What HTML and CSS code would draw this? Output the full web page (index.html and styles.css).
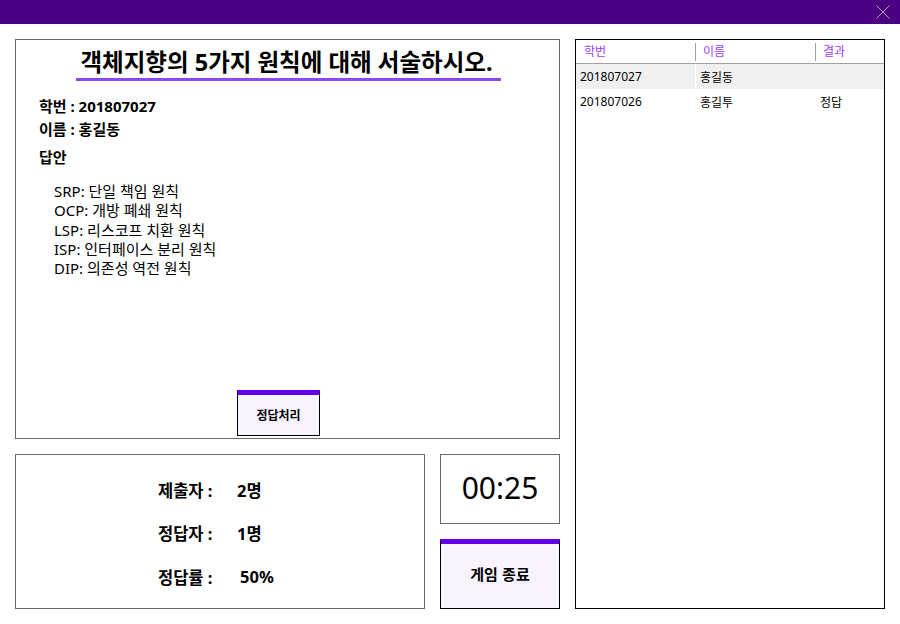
FILE: index.html
```html
<!DOCTYPE html>
<html lang="ko">
<head>
<meta charset="utf-8">
<title>채점</title>
<link rel="stylesheet" href="styles.css">
</head>
<body>
<div class="titlebar">
  <svg class="close" width="14" height="14" viewBox="0 0 14 14"><path d="M0.5 0.5 L13.5 13.5 M13.5 0.5 L0.5 13.5" stroke="#a8a8a8" stroke-width="1" fill="none"/></svg>
</div>
<div class="main">
  <div class="left">
    <section class="question">
      <h1 class="q-title"><span>객체지향의 5가지 원칙에 대해 서술하시오.</span></h1>
      <div class="info">학번 : 201807027</div>
      <div class="info">이름 : 홍길동</div>
      <div class="info answer-label">답안</div>
      <div class="answer">
        <div>SRP: 단일 책임 원칙</div>
        <div>OCP: 개방 폐쇄 원칙</div>
        <div>LSP: 리스코프 치환 원칙</div>
        <div>ISP: 인터페이스 분리 원칙</div>
        <div>DIP: 의존성 역전 원칙</div>
      </div>
      <button class="btn btn-mark">정답처리</button>
    </section>
    <div class="bottom">
      <section class="stats">
        <div class="stat"><span class="label">제출자 :</span><span class="val">2명</span></div>
        <div class="stat"><span class="label">정답자 :</span><span class="val">1명</span></div>
        <div class="stat"><span class="label">정답률 :</span><span class="val val-wide">50%</span></div>
      </section>
      <div class="side">
        <div class="timer">00:25</div>
        <button class="btn btn-end">게임 종료</button>
      </div>
    </div>
  </div>
  <section class="list">
    <div class="row head">
      <div class="cell">학번</div>
      <div class="cell sep">이름</div>
      <div class="cell sep">결과</div>
    </div>
    <div class="row alt">
      <div class="cell">201807027</div>
      <div class="cell">홍길동</div>
      <div class="cell"></div>
    </div>
    <div class="row">
      <div class="cell">201807026</div>
      <div class="cell">홍길투</div>
      <div class="cell">정답</div>
    </div>
  </section>
</div>
</body>
</html>
```
FILE: styles.css
```css
* { box-sizing: border-box; }
html, body { margin: 0; padding: 0; }
body {
  width: 900px;
  height: 624px;
  background: #fff;
  font-family: "Noto Sans", "Noto Sans CJK KR", sans-serif;
  color: #000;
  overflow: hidden;
}
.titlebar {
  height: 24px;
  background: #4b0082;
  display: flex;
  justify-content: flex-end;
  align-items: flex-start;
}
.close { margin: 5px 10px 0 0; display: block; }
.main {
  display: flex;
  gap: 15px;
  padding: 15px;
  height: 600px;
}
.left {
  width: 545px;
  display: flex;
  flex-direction: column;
  gap: 15px;
}
.question {
  height: 400px;
  border: 1px solid #696969;
  display: flex;
  flex-direction: column;
  padding: 0 0 1px 0;
}
.q-title {
  margin: 7px 0 0 0;
  text-align: center;
  font-size: 23.5px;
  font-weight: 700;
  line-height: 30px;
}
.q-title span {
  display: inline-block;
  padding: 0 8px 1px 4px;
  border-bottom: 3px solid #8a48f2;
  margin-left: 2px;
}
.info {
  font-family: "Noto Sans", "Noto Sans CJK KR", sans-serif;
  font-weight: 700;
  font-size: 15px;
  line-height: 23px;
  padding-left: 23px;
}
.info:nth-of-type(1) { margin-top: 14px; }
.answer-label { margin-top: 5px; }
.answer {
  flex: 1;
  padding: 13px 0 0 38px;
  font-size: 15px;
  line-height: 19.3px;
}
.btn {
  font-family: "Noto Sans CJK KR", sans-serif;
  font-weight: 700;
  background: #f8f4ff;
  border: 1px solid #000;
  border-top: 5px solid #6200ea;
  color: #000;
  padding: 0;
  cursor: pointer;
}
.btn-mark {
  align-self: flex-start;
  margin-left: 221px;
  width: 83px;
  height: 46px;
  font-size: 12px;
  margin-bottom: 1px;
  padding-bottom: 2px;
}
.bottom {
  display: flex;
  gap: 15px;
  height: 155px;
}
.stats {
  width: 410px;
  border: 1px solid #696969;
  padding: 13px 0 0 142px;
}
.stat {
  height: 43.5px;
  display: flex;
  align-items: center;
  font-weight: 700;
  font-size: 16.5px;
}
.label { width: 79px; }
.val-wide { margin-left: 3px; }
.side {
  width: 120px;
  display: flex;
  flex-direction: column;
  gap: 15px;
}
.timer {
  height: 70px;
  border: 1px solid #696969;
  display: flex;
  align-items: center;
  justify-content: center;
  font-size: 30px;
  padding-bottom: 3px;
}
.btn-end {
  height: 70px;
  font-size: 15px;
  padding-bottom: 5px;
}
.list {
  width: 310px;
  height: 570px;
  border: 1px solid #000;
  font-size: 12px;
}
.row {
  display: grid;
  grid-template-columns: 120px 120px 1fr;
  height: 25px;
  align-items: center;
}
.row .cell { padding-left: 4px; }
.head {
  height: 24px;
  border-bottom: 1px solid #a0a0a0;
  color: #9a3df5;
  font-size: 12px;
}
.head .cell { padding-left: 8px; height: 18px; line-height: 18px; }
.head .sep { border-left: 1px solid #a0a0a0; padding-left: 7px; margin-left: -1px; }
.alt { background: #efefef; }
.alt .cell:first-child { border-right: 1px solid #fff; height: 25px; line-height: 25px; }
```
